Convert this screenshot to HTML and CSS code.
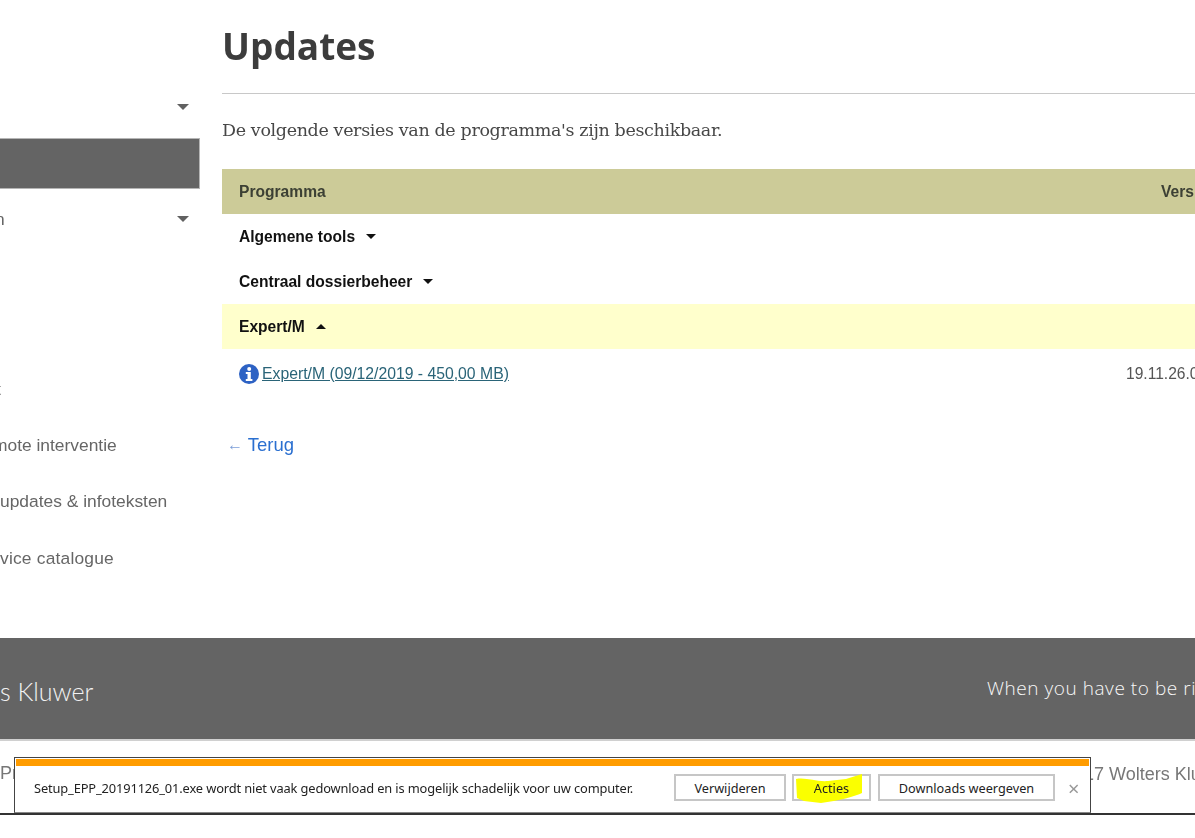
FILE: index.html
```html
<!DOCTYPE html>
<html lang="nl">
<head>
<meta charset="utf-8">
<title>Updates</title>
<link rel="stylesheet" href="styles.css">
</head>
<body>
<div class="page">
  <div class="top">
    <nav class="side">
      <div class="side-row first"><span></span><i class="caret"></i></div>
      <div class="side-active"></div>
      <div class="side-row second"><span class="clip-n">n</span><i class="caret"></i></div>
      <div class="side-link l1"><span class="shift-a">t</span></div>
      <div class="side-link l2"><span class="shift-b">mote interventie</span></div>
      <div class="side-link l3"><span class="shift-c">updates &amp; infoteksten</span></div>
      <div class="side-link l4"><span class="shift-d">vice catalogue</span></div>
    </nav>
    <main class="main">
      <h1 class="title">Updates</h1>
      <p class="intro">De volgende versies van de programma's zijn beschikbaar.</p>
      <div class="table">
        <div class="row head"><span>Programma</span><span class="col2">Versie</span></div>
        <div class="row group"><span>Algemene tools</span><i class="tri down"></i></div>
        <div class="row group"><span>Centraal dossierbeheer</span><i class="tri down"></i></div>
        <div class="row group open"><span>Expert/M</span><i class="tri up"></i></div>
        <div class="row item">
          <svg class="info" viewBox="0 0 20 20" aria-hidden="true"><circle cx="10" cy="10" r="10" fill="#2d62c4"/><circle cx="10.2" cy="4.9" r="2" fill="#fff"/><path d="M6.8 8h5v7h1.6v2H6.8v-2h1.7v-5H6.8z" fill="#fff"/></svg>
          <a class="file" href="#">Expert/M (09/12/2019 - 450,00 MB)</a>
          <span class="ver">19.11.26.01</span>
        </div>
      </div>
      <a class="back" href="#"><span class="arrow">←</span> Terug</a>
    </main>
  </div>
  <footer class="footer">
    <div class="brand">s Kluwer</div>
    <div class="slogan">When you have to be right</div>
  </footer>
  <div class="legal"><span class="legal-l">Pr</span><span class="legal-r">17 Wolters Kluwer</span></div>
  <div class="endline"></div>
  <div class="bar">
    <div class="bar-stripe"></div>
    <div class="bar-body">
      <span class="msg">Setup_EPP_20191126_01.exe wordt niet vaak gedownload en is mogelijk schadelijk voor uw computer.</span>
      <button class="btn b1">Verwijderen</button>
      <button class="btn b2"><svg class="mark" viewBox="0 0 66 30" aria-hidden="true"><path d="M0 5C10 3 20 8 32 7L50 5L66 0L66 19C60 22 42 27 25 29L8 27L1 24Z" fill="#fbff00"/></svg><span class="btn-t">Acties</span></button>
      <button class="btn b3">Downloads weergeven</button>
      <span class="close">×</span>
    </div>
  </div>
</div>
</body>
</html>
```
FILE: styles.css
```css
* { box-sizing: border-box; }
html, body { margin: 0; padding: 0; background: #fff; }
.page { position: relative; width: 1195px; height: 838px; overflow: hidden; font-family: "Liberation Sans", Arial, sans-serif; filter: blur(0.4px); }
.top { display: flex; height: 638px; }

.side { width: 200px; flex: none; color: #666; font-size: 17.4px; overflow: hidden; }
.side-row { display: flex; justify-content: space-between; align-items: center; padding-right: 11px; }
.side-row.first { height: 24px; margin-top: 95px; margin-bottom: 19px; }
.side-active { height: 51px; background: #646464; border: 1px solid #b5b5b5; border-left: 0; }
.side-row.second { height: 22px; margin-top: 19px; }
.caret { width: 0; height: 0; border-left: 6px solid transparent; border-right: 6px solid transparent; border-top: 6px solid #616161; }
.clip-n { margin-left: -5px; }
.side-link { white-space: nowrap; line-height: 22px; }
.l1 { margin-top: 148px; }
.l2 { margin-top: 34px; }
.l3 { margin-top: 34px; }
.l4 { margin-top: 35px; }
.shift-a { margin-left: -4px; display: inline-block; }
.shift-b { margin-left: -7px; display: inline-block; }
.shift-c { margin-left: 0; display: inline-block; }
.shift-d { margin-left: 0; display: inline-block; letter-spacing: 0.2px; }

.main { flex: 1; min-width: 0; margin-left: 22px; overflow: hidden; }
.title { margin: 0; height: 94px; padding-top: 20px; font: 700 37px/52px "Open Sans", sans-serif; color: #3c3c3c; border-bottom: 1px solid #c8c8c8; }
.intro { margin: 24px 0 0; height: 51px; font: 17.5px/24px "DejaVu Serif", serif; color: #474747; letter-spacing: -0.36px; }
.table { width: 1100px; }
.row { display: flex; align-items: center; height: 45px; padding-left: 17px; font-size: 15.6px; color: #111; position: relative; }
.head { background: #cccb98; font-weight: 700; color: #3c4034; }
.col2 { position: absolute; left: 939px; }
.group { font-weight: 700; }
.open { background: #ffffcc; }
.tri { width: 0; height: 0; margin-left: 11px; border-left: 5px solid transparent; border-right: 5px solid transparent; }
.tri.down { border-top: 5px solid #111; }
.tri.up { border-bottom: 5px solid #111; }
.item { height: 50px; }
.info { width: 20px; height: 20px; margin-right: 3px; flex: none; }
.file { color: #2a6478; font-size: 15.75px; }
.ver { position: absolute; left: 904px; font-size: 15.6px; color: #555; }
.back { display: inline-block; margin: 35px 0 0 5px; color: #2a6fd0; font-size: 18.5px; line-height: 22px; text-decoration: none; }
.arrow { color: #7d9fd8; font-size: 16px; position: relative; top: -1px; }

.footer { height: 101px; background: #646464; color: #f2f2f2; display: flex; align-items: center; position: relative; }
.brand { margin-left: 0; font: 300 25px/32px "Lato", sans-serif; margin-top: 5px; }
.slogan { position: absolute; left: 987px; top: 37px; white-space: nowrap; font: 300 19px/26px "Open Sans", sans-serif; letter-spacing: 0.55px; color: #f8f8f8; }
.legal { height: 74px; border-top: 2px solid #d0d0d0; color: #777; font-size: 18px; position: relative; }
.legal-l { position: absolute; left: 0; top: 22px; }
.legal-r { position: absolute; left: 1084px; top: 23px; white-space: nowrap; }
.endline { height: 2px; background: #333; }

.bar { position: absolute; left: 14px; top: 757px; width: 1077px; height: 56px; background: #fff; border: 1px solid #444; border-bottom-color: #888; padding: 1px; display: flex; flex-direction: column; }
.bar-stripe { height: 7px; background: #ff9c00; flex: none; }
.bar-body { flex: 1; display: flex; align-items: center; position: relative; font: 12.85px/16px "Noto Sans", sans-serif; color: #222; }
.msg { margin-left: 18px; margin-top: -2px; white-space: nowrap; width: 640px; letter-spacing: -0.13px; }
.btn { height: 27px; background: #fff; border: 2px solid #c6c6c6; font: 12.7px/16px "Noto Sans", sans-serif; color: #222; padding: 2px 0 0; position: relative; margin-top: -3px; }
.b1 { width: 112px; margin-left: 0; }
.b2 { width: 79px; margin-left: 6px; }
.b3 { width: 177px; margin-left: 7px; }
.mark { position: absolute; left: 2px; top: -2px; width: 66px; height: 30px; overflow: visible; }
.btn-t { position: relative; }
.close { color: #999; font-size: 20px; margin-left: 13px; line-height: 20px; }
```
